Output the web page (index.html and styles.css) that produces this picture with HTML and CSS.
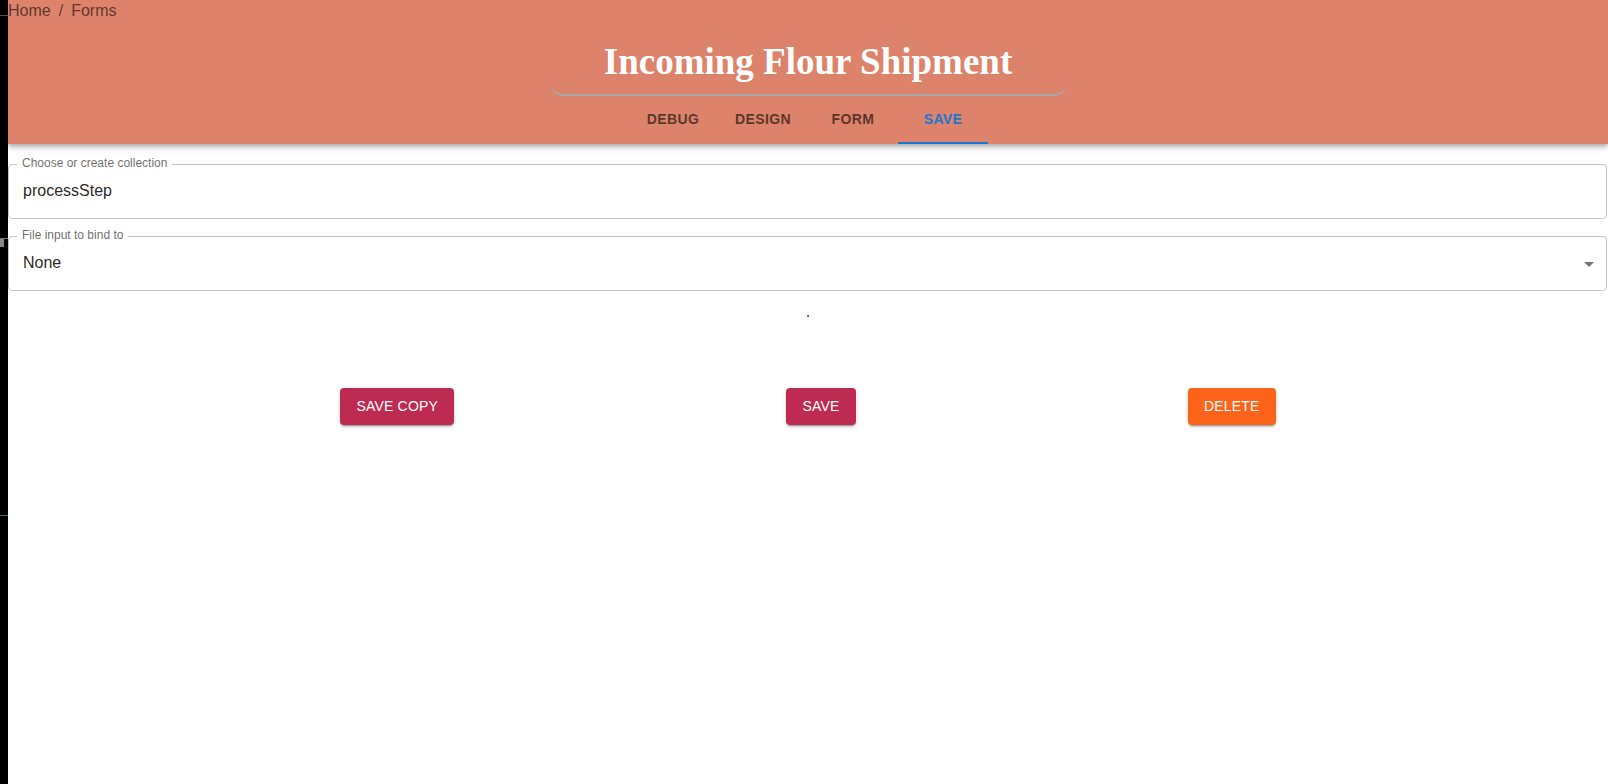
FILE: index.html
```html
<!DOCTYPE html>
<html lang="en">
<head>
<meta charset="utf-8">
<title>Incoming Flour Shipment</title>
<link rel="stylesheet" href="styles.css">
</head>
<body>
<span class="edge-mark edge-mark-top"></span>
<span class="edge-mark edge-mark-mid"></span>
<span class="edge-mark edge-mark-knob"></span>
<span class="edge-mark edge-mark-green"></span>
<header class="appbar">
  <nav class="crumbs">
    <span class="crumb">Home</span>
    <span class="crumb-sep">/</span>
    <span class="crumb">Forms</span>
  </nav>
  <div class="title-wrap">
    <h1 class="title">Incoming Flour Shipment</h1>
  </div>
  <div class="tabs">
    <div class="tab">Debug</div>
    <div class="tab">Design</div>
    <div class="tab">Form</div>
    <div class="tab tab-active">Save</div>
  </div>
</header>
<main class="content">
  <fieldset class="field">
    <legend class="field-label">Choose or create collection</legend>
    <div class="field-value">processStep</div>
  </fieldset>
  <fieldset class="field field-select">
    <legend class="field-label">File input to bind to</legend>
    <div class="field-value select-row">
      <span>None</span>
      <svg class="select-arrow" width="10" height="5" viewBox="0 0 10 5"><path d="M0 0 L5 5 L10 0 Z" fill="rgba(0,0,0,0.54)"/></svg>
    </div>
  </fieldset>
  <div class="dot-line">.</div>
  <div class="actions">
    <button class="btn btn-primary">Save copy</button>
    <button class="btn btn-primary">Save</button>
    <button class="btn btn-danger">Delete</button>
  </div>
</main>
</body>
</html>
```
FILE: styles.css
```css
html {
  background: #000;
}
body {
  margin: 0 0 0 8px;
  min-height: 784px;
  background: #fff;
  font-family: "Liberation Sans", Arial, sans-serif;
  color: rgba(0, 0, 0, 0.87);
}
.edge-mark {
  position: absolute;
  left: 0;
  display: block;
}
.edge-mark-top {
  top: 15px;
  width: 8px;
  height: 1px;
  background: #555;
}
.edge-mark-mid {
  top: 238px;
  width: 8px;
  height: 1px;
  background: #777;
}
.edge-mark-knob {
  top: 239px;
  width: 4px;
  height: 8px;
  background: #888;
}
.edge-mark-green {
  top: 515px;
  width: 8px;
  height: 1px;
  background: #2e7d32;
}
.appbar {
  background: #dd826b;
  box-shadow: 0 2px 4px -1px rgba(0,0,0,0.2), 0 4px 5px 0 rgba(0,0,0,0.14), 0 1px 10px 0 rgba(0,0,0,0.12);
  display: flex;
  flex-direction: column;
  align-items: center;
  position: relative;
}
.crumbs {
  align-self: stretch;
  display: flex;
  height: 21px;
  padding-top: 1px;
  box-sizing: border-box;
  line-height: 20px;
  font-size: 16px;
  color: rgba(0, 0, 0, 0.6);
}
.crumb-sep {
  margin: 0 8px;
}
.title-wrap {
  width: 515px;
  padding: 19px 0 11px;
  border-bottom: 2px solid #a7a9ae;
  border-radius: 0 0 12px 12px;
  text-align: center;
}
.title {
  margin: 0;
  font-family: "Liberation Serif", "Times New Roman", serif;
  font-weight: 700;
  font-size: 37px;
  line-height: 43px;
  color: #fff;
}
.tabs {
  display: flex;
  height: 48px;
}
.tab {
  width: 90px;
  display: flex;
  align-items: center;
  justify-content: center;
  font-size: 14px;
  font-weight: 700;
  letter-spacing: 0.4px;
  text-transform: uppercase;
  color: rgba(0, 0, 0, 0.6);
  padding-bottom: 3px;
  box-sizing: border-box;
}
.tab-active {
  color: #1976d2;
  border-bottom: 2px solid #1976d2;
  padding-bottom: 1px;
}
.content {
  display: flex;
  flex-direction: column;
  padding-top: 12px;
}
.field {
  margin: 0 1px 0 0;
  padding: 0 14px 16px;
  border: 1px solid #c4c4c4;
  border-radius: 4px;
  min-width: 0;
}
.field + .field {
  margin-top: 9px;
}
.field-label {
  margin-left: -6px;
  padding: 0 5px 3px;
  font-size: 12px;
  line-height: 14px;
  color: rgba(0, 0, 0, 0.6);
}
.field-value {
  margin-top: 6px;
  font-size: 16px;
  line-height: 23px;
  color: rgba(0, 0, 0, 0.87);
}
.select-row {
  display: flex;
  justify-content: space-between;
  align-items: center;
}
.select-arrow {
  margin-right: -2px;
  margin-top: 3px;
}
.dot-line {
  margin-top: 9px;
  text-align: center;
  font-size: 16px;
  line-height: 24px;
  color: rgba(0, 0, 0, 0.87);
}
.actions {
  margin-top: 64px;
  display: flex;
  justify-content: space-evenly;
}
.btn {
  font-family: "Liberation Sans", Arial, sans-serif;
  font-size: 14px;
  line-height: 24.5px;
  letter-spacing: 0.2px;
  text-transform: uppercase;
  color: #fff;
  border: 0;
  border-radius: 4px;
  padding: 6px 16px;
  box-shadow: 0 3px 1px -2px rgba(0,0,0,0.2), 0 2px 2px 0 rgba(0,0,0,0.14), 0 1px 5px 0 rgba(0,0,0,0.12);
}
.btn-primary {
  background: #bd2a52;
}
.btn-danger {
  background: #fe6319;
}
```
